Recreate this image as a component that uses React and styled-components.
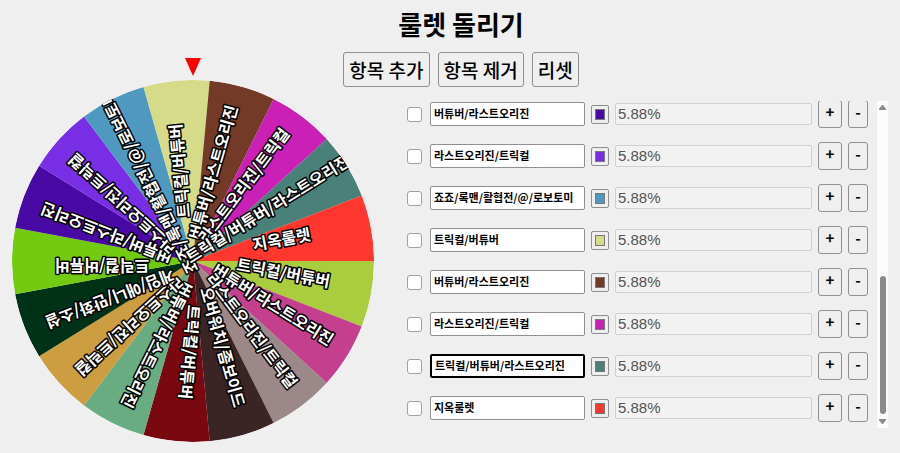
import { useState } from 'react';
import styled, { createGlobalStyle } from 'styled-components';

const GlobalStyle = createGlobalStyle`
  body {
    margin: 0;
    background: #efefef;
    color: #000;
    font-family: 'Noto Sans CJK KR', sans-serif;
  }
  * {
    box-sizing: border-box;
  }
`

const Page = styled.main`
  display: grid;
  grid-template-columns: minmax(0, 362px) minmax(0, 1fr);
  column-gap: 29px;
  padding: 4px 12px 11px;
`
const Header = styled.header`
  grid-area: 1 / 1 / 2 / 3;
  display: flex;
  flex-direction: column;
  align-items: center;
  gap: 8px;
  padding-left: 22px;
  padding-bottom: 14px;
`
const Title = styled.h1`
  margin: 0;
  font-size: 26px;
  line-height: 40px;
  font-weight: 700;
`
const Toolbar = styled.div`
  display: flex;
  gap: 8px;
`
const Button = styled.button`
  border: 1px solid #8f8f8f;
  border-radius: 3px;
  background: #efefef;
  color: #000;
  padding: 0;
  font-family: inherit;
  cursor: pointer;
  &:hover {
    background: #e5e5e5;
  }
`
const ToolButton = styled(Button)`
  height: 35px;
  padding: 0 5px;
  font-size: 19px;
  line-height: 32px;
  font-weight: 500;
`
const StepButton = styled(Button)`
  flex: none;
  width: ${props => props.$wide ? '24px' : '20px'};
  height: 28px;
  padding-bottom: 4px;
  font-size: 15px;
  line-height: 22px;
  font-weight: 700;
`

/** Wheel, with the pointer lying over its top edge */
const WheelBox = styled.div`
  grid-area: 1 / 1 / 3 / 2;
  align-self: end;
  position: relative;
`
const Wheel = styled.svg`
  display: block;
  width: 100%;
  border-radius: 50%;
`
const SliceText = styled.text`
  font-size: 16px;
  font-weight: 700;
  text-anchor: middle;
  fill: #fff;
  stroke: #000;
  stroke-width: 3px;
  stroke-linejoin: round;
  paint-order: stroke;
`
const Pointer = styled.div`
  position: absolute;
  top: -22px;
  left: 50%;
  margin-left: -8px;
  border-left: 8px solid transparent;
  border-right: 8px solid transparent;
  border-top: 18px solid #f00;
`

const ListBox = styled.section`
  grid-area: 2 / 2 / 3 / 3;
  display: flex;
  height: 327px;
  margin-bottom: 14px;
`
const List = styled.div`
  flex: 1;
  min-width: 0;
  display: flex;
  flex-direction: column;
  justify-content: flex-end;
  gap: 14px;
  padding: 0 9px 6px 4px;
  overflow: hidden;
`
const Row = styled.div`
  flex: none;
  display: flex;
  align-items: center;
  gap: 6px;
`
const Check = styled.input`
  appearance: none;
  flex: none;
  width: 15px;
  height: 15px;
  margin: 0 2px 0 0;
  border: 1px solid #a0a0a0;
  border-radius: 3px;
  background: #fff;
  &:checked {
    background: #0075ff;
  }
`
const NameInput = styled.input`
  flex: 0 1 155px;
  min-width: 0;
  height: 24px;
  padding: 0 3px 2px;
  border: ${props => props.$active ? '2px solid #000' : '1px solid #8f8f8f'};
  border-radius: 2px;
  background: #fff;
  color: #000;
  font-family: inherit;
  font-size: 11px;
  font-weight: 700;
  outline: none;
`
const ColorInput = styled.input`
  appearance: none;
  flex: none;
  width: 18px;
  height: 19px;
  padding: 3px;
  border: 1px solid #8f8f8f;
  border-radius: 2px;
  background: #efefef;
  &::-webkit-color-swatch-wrapper {
    padding: 0;
  }
  &::-webkit-color-swatch {
    border: 1px solid #777;
  }
`
const RateInput = styled.input`
  flex: 1;
  min-width: 0;
  height: 22px;
  padding: 0 2px 2px;
  border: 1px solid #d0d0d0;
  border-radius: 2px;
  background: #f2f2f2;
  color: #545454;
  font-family: 'Liberation Sans', sans-serif;
  font-size: 15px;
`
const ScrollTrack = styled.div`
  flex: none;
  display: flex;
  flex-direction: column;
  align-items: center;
  width: 11px;
  padding: 4px 0;
  background: #fcfcfc;
`
const ScrollArrow = styled.svg`
  display: block;
  width: 7px;
  height: 5px;
  fill: #8b8b8b;
`
const ScrollThumb = styled.div`
  width: 6px;
  height: 138px;
  margin-top: auto;
  margin-bottom: 5px;
  border-radius: 3px;
  background: #8b8b8b;
`

const ITEMS = [
  { name: '트릭컬/버튜버', color: '#aacd40' },
  { name: '버튜버/라스트오리진', color: '#c43f8d' },
  { name: '라스트오리진/트릭컬', color: '#9c8888' },
  { name: '오버워치/좀보이드', color: '#3a2424' },
  { name: '트릭컬/버튜버', color: '#7a0811' },
  { name: '버튜버/라스트오리진', color: '#69ac82' },
  { name: '라스트오리진/트릭컬', color: '#cd9e41' },
  { name: '게임/애니/만화/소설', color: '#003218' },
  { name: '트릭컬/버튜버', color: '#72cb10' },
  { name: '버튜버/라스트오리진', color: '#4809a5' },
  { name: '라스트오리진/트릭컬', color: '#782ee5' },
  { name: '죠죠/록맨/활협전/@/로보토미', color: '#4f98c0' },
  { name: '트릭컬/버튜버', color: '#d6db89' },
  { name: '버튜버/라스트오리진', color: '#733a28' },
  { name: '라스트오리진/트릭컬', color: '#cb20b5' },
  { name: '트릭컬/버튜버/라스트오리진', color: '#498078' },
  { name: '지옥룰렛', color: '#ff372f' },
]

const FIRST_VISIBLE = 9
const ACTIVE = 15
const RADIUS = 181
const STEP = 360 / ITEMS.length

const point = deg => {
  const rad = deg * Math.PI / 180
  return `${RADIUS * Math.cos(rad)} ${RADIUS * Math.sin(rad)}`
}

const slicePath = i =>
  `M0 0 L${point(i * STEP)} A${RADIUS} ${RADIUS} 0 0 1 ${point((i + 1) * STEP)} Z`

export default function App() {
  const [items, setItems] = useState(ITEMS)
  const rate = (100 / items.length).toFixed(2) + '%'

  const change = (index, patch) =>
    setItems(items.map((item, i) => i === index ? { ...item, ...patch } : item))

  return (
    <>
      <GlobalStyle />
      <Page>
        <Header>
          <Title>룰렛 돌리기</Title>
          <Toolbar>
            <ToolButton type="button">항목 추가</ToolButton>
            <ToolButton type="button">항목 제거</ToolButton>
            <ToolButton type="button" onClick={() => setItems(ITEMS)}>리셋</ToolButton>
          </Toolbar>
        </Header>

        <WheelBox>
          <Wheel viewBox="-181 -181 362 362">
            {items.map((item, i) => (
              <path key={i} d={slicePath(i)} fill={item.color} />
            ))}
            {/* names go on top of every slice, long ones cross the centre */}
            {items.map((item, i) => (
              <SliceText key={i} x="91" y="1" transform={`rotate(${(i + 0.5) * STEP})`}>
                {item.name}
              </SliceText>
            ))}
          </Wheel>
          <Pointer />
        </WheelBox>

        <ListBox>
          <List>
            {items.map((item, i) => i >= FIRST_VISIBLE && (
              <Row key={i}>
                <Check type="checkbox" aria-label={`${item.name} 선택`} />
                <NameInput
                  type="text"
                  aria-label="항목 이름"
                  value={item.name}
                  $active={i === ACTIVE}
                  onChange={e => change(i, { name: e.target.value })}
                />
                <ColorInput
                  type="color"
                  aria-label="항목 색상"
                  value={item.color}
                  onChange={e => change(i, { color: e.target.value })}
                />
                <RateInput type="text" aria-label="확률" value={rate} disabled />
                <StepButton type="button" $wide>+</StepButton>
                <StepButton type="button">-</StepButton>
              </Row>
            ))}
          </List>
          <ScrollTrack>
            <ScrollArrow viewBox="0 0 7 5"><path d="M3 0h1l3 4v1H0V4z" /></ScrollArrow>
            <ScrollThumb />
            <ScrollArrow viewBox="0 0 7 5"><path d="M0 0h7v1L4 5H3L0 1z" /></ScrollArrow>
          </ScrollTrack>
        </ListBox>
      </Page>
    </>
  )
}
